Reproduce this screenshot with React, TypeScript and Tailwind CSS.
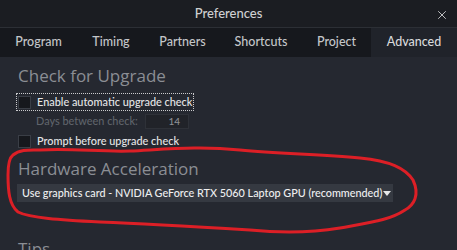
import { X } from "lucide-react";

const tabs = [
  ["Program", "w-[77px]"],
  ["Timing", "w-[68px]"],
  ["Partners", "w-[75px]"],
  ["Shortcuts", "w-[82px]"],
  ["Project", "w-[69px]"],
];

function Checkbox() {
  return <span className="w-[13px] h-[13px] bg-[#16181d] border border-[#3a3e46] shrink-0" />;
}

const heading = "text-[17px] leading-[24px] text-[#8b8e94] font-['Open_Sans',sans-serif]";

export default function App() {
  return (
    <div
      className="relative w-[457px] h-[250px] overflow-hidden bg-[#252830] text-[#e4e5e7]"
      style={{ fontFamily: "Lato, 'Liberation Sans', sans-serif" }}
    >
      {/* title bar */}
      <div className="relative h-[28px] flex items-center justify-center bg-[#1b1d22] border-b border-[#2c2f35]">
        <span className="text-[13px] text-[#cfd0d2] font-medium">Preferences</span>
        <X className="absolute right-[8px] top-[8px] w-[14px] h-[14px] text-[#c9cacc]" strokeWidth={1.6} />
      </div>

      {/* tabs */}
      <div className="flex h-[29px] bg-[#16181d] text-[12.5px] font-medium text-[#c4c6c9]">
        {tabs.map(([t, w]) => (
          <div key={t} className={`${w} flex items-center justify-center`}>{t}</div>
        ))}
        <div className="flex-1 flex items-center justify-center bg-[#20232a] text-[#d9dadc]">Advanced</div>
      </div>

      {/* content */}
      <div className="px-[18px] pt-[7px]">
        <h2 className={heading}>Check for Upgrade</h2>

        <div className="mt-[6px] flex flex-col text-[10.9px] font-medium">
          <div className="flex items-center gap-[6px] w-[176px] h-[16px] outline-1 outline-dotted outline-[#c9cacc] -ml-[1px] pl-[1px]">
            <Checkbox />
            <span className="whitespace-nowrap">Enable automatic upgrade check</span>
          </div>
          <div className="flex items-center mt-[3px] h-[16px]">
            <span className="ml-[18px] w-[109px] text-[#5f636a] whitespace-nowrap">Days between check:</span>
            <span className="w-[44px] h-[15px] bg-[#212329] border border-[#2e3138] text-[10px] text-[#8c8f95] flex items-center justify-end pr-[8px]">14</span>
          </div>
          <div className="flex items-center gap-[6px] mt-[5px] h-[14px]">
            <Checkbox />
            <span className="whitespace-nowrap">Prompt before upgrade check</span>
          </div>
        </div>

        <h2 className={`mt-[9px] ${heading}`}>Hardware Acceleration</h2>

        <div className="mt-[3px] -ml-[1px] w-[376px] h-[18px] bg-[#353941] flex items-center pl-[5px] pr-[4px] text-[10.8px] font-medium text-[#eeeff0]">
          <span className="whitespace-nowrap">Use graphics card - NVIDIA GeForce RTX 5060 Laptop GPU (recommended)</span>
          <span className="ml-[1px] w-0 h-0 border-l-[4px] border-r-[4px] border-t-[5px] border-l-transparent border-r-transparent border-t-[#e6e7e8]" />
        </div>

        <h2 className={`mt-[35px] ${heading}`}>Tips</h2>
      </div>

      {/* red hand-drawn circle */}
      <svg className="absolute inset-0 pointer-events-none" width="457" height="250" viewBox="0 0 457 250">
        <path
          d="M13 155 C20 149 30 150 40 150 C70 148 100 152 130 151 C170 149 200 146 240 150 C280 154 320 154 360 158 C390 161 405 168 413 180 C420 195 414 205 405 210 C390 220 373 222 340 228 C310 233 280 233 250 230 C200 227 150 224 100 222 C60 220 30 218 18 212 C9 205 8 190 8 175 C8 165 9 158 13 155"
          fill="none"
          stroke="#dc1f26"
          strokeWidth="3"
          strokeLinecap="round"
          strokeLinejoin="round"
        />
      </svg>
    </div>
  );
}
